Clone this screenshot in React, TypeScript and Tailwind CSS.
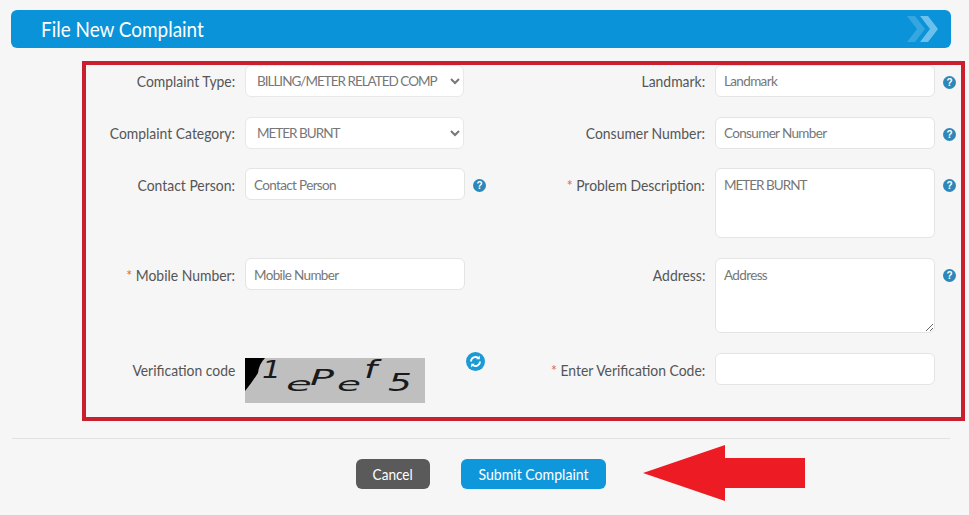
import React from "react";

function Help() {
  return (
    <svg width="13" height="13" viewBox="0 0 13 13" className="shrink-0">
      <circle cx="6.5" cy="6.5" r="6.5" fill="#2d88b8" />
      <text x="6.5" y="10" textAnchor="middle" fontSize="10" fontWeight="700" fill="#fff" fontFamily="Liberation Sans, sans-serif">?</text>
    </svg>
  );
}

function Label({ text, req, tight }: { text: string; req?: boolean; tight?: boolean }) {
  return (
    <div className={`flex w-[149px] shrink-0 justify-end text-right text-[16px] text-[#555] whitespace-nowrap ${tight ? "leading-[32px]" : "leading-[33px]"}`}>
      <span className="inline-block origin-right scale-x-[0.87]">
        {req && <span className="text-[#e4663a]">* </span>}
        {text}
      </span>
    </div>
  );
}

const ctl = "w-[220px] shrink-0 rounded-[6px] border border-[#e4e4e4] bg-white text-[13.5px] tracking-[-0.65px] text-[#777] outline-none placeholder:text-[#777]";

function Field({ label, req, placeholder, value, h = "h-[32px]", multi, resize, help = true, tight }: { label: string; req?: boolean; placeholder?: string; value?: string; h?: string; multi?: boolean; resize?: boolean; help?: boolean; tight?: boolean }) {
  return (
    <div className="flex items-start">
      <Label text={label} req={req} tight={tight} />
      {multi ? (
        <textarea readOnly defaultValue={value} placeholder={placeholder} className={`${ctl} ${h} ml-[10px] px-[8px] py-[7px] leading-[18px] ${resize ? "resize" : "resize-none"} ${value ? "tracking-[-1px]" : ""}`} />
      ) : (
        <input readOnly placeholder={placeholder} className={`${ctl} ${h} ml-[10px] px-[8px] ${tight ? "" : "pt-[1px]"}`} />
      )}
      {help && <div className="ml-[8px] mt-[11px]"><Help /></div>}
    </div>
  );
}

function Select({ label, value }: { label: string; value: string }) {
  return (
    <div className="flex items-start">
      <Label text={label} tight />
      <select defaultValue={value} className="ml-[10px] h-[32px] w-[219px] rounded-[6px] border border-[#e8e8e8] bg-white pl-[7px] text-[13.5px] tracking-[-1px] text-[#777] outline-none">
        <option>{value}</option>
      </select>
    </div>
  );
}

export default function App() {
  return (
    <div className="h-[515px] w-[969px] overflow-hidden bg-[#f6f6f6] pt-[10px] [font-family:Lato,'Liberation_Sans',sans-serif]">
      <div className="ml-[11px] flex h-[38px] w-[940px] items-center justify-between rounded-[6px] bg-[#0a93d8] pb-[2px] pl-[30px] pr-[12px]">
        <span className="inline-block origin-left scale-x-[0.86] text-[22px] text-white">File New Complaint</span>
        <svg width="32" height="26" viewBox="0 0 32 26" className="mt-[2px]">
          <path d="M0 0h8l10 13L8 26H0l10-13z" fill="#36a6e0" />
          <path d="M13 0h8l10 13-10 13h-8l10-13z" fill="#6cc0ec" />
        </svg>
      </div>

      <div className="ml-[82px] mt-[13px] grid h-[360px] w-[883px] grid-cols-[470px_1fr] grid-rows-[52px_51px_90px_95px_1fr] border-4 border-[#c8202f]">
        <Select label="Complaint Type:" value="BILLING/METER RELATED COMP" />
        <Field label="Landmark:" placeholder="Landmark" tight />
        <Select label="Complaint Category:" value="METER BURNT" />
        <Field label="Consumer Number:" placeholder="Consumer Number" tight />
        <Field label="Contact Person:" placeholder="Contact Person" />
        <Field label="Problem Description:" req multi h="h-[70px]" value="METER BURNT" />
        <Field label="Mobile Number:" req placeholder="Mobile Number" help={false} />
        <Field label="Address:" multi resize h="h-[75px]" placeholder="Address" />
        <div className="flex items-start">
          <Label text="Verification code" />
          <svg width="180" height="45" viewBox="0 0 180 45" className="ml-[10px] mt-[5px] shrink-0">
            <rect width="180" height="45" fill="#bfbfbf" />
            <path d="M0 0h20Q14 6 13 15Q6 26 0 33z" fill="#000" />
            <g fontFamily="DejaVu Sans, sans-serif" fontStyle="italic" fill="#1a1a1a">
              <text x="17" y="20" fontSize="24" textLength="19" lengthAdjust="spacingAndGlyphs">1</text>
              <text x="41" y="33" fontSize="20" textLength="26" lengthAdjust="spacingAndGlyphs">e</text>
              <text x="65" y="27" fontSize="21" textLength="24" lengthAdjust="spacingAndGlyphs">P</text>
              <text x="92" y="33" fontSize="20" textLength="24" lengthAdjust="spacingAndGlyphs">e</text>
              <text x="119" y="20" fontSize="24" textLength="13" lengthAdjust="spacingAndGlyphs">f</text>
              <text x="143" y="33" fontSize="24" textLength="24" lengthAdjust="spacingAndGlyphs">5</text>
            </g>
          </svg>
          <svg width="19" height="19" viewBox="0 0 19 19" className="ml-[41px] -mt-[1px] shrink-0">
            <circle cx="9.5" cy="9.5" r="9.5" fill="#1b9ad6" />
            <path d="M5 9.5a4.5 4.5 0 0 1 7.5-3.3M14 9.5a4.5 4.5 0 0 1-7.5 3.3" fill="none" stroke="#fff" strokeWidth="1.8" />
            <path d="M13.8 3.6v3.6h-3.6zM5.2 15.4v-3.6h3.6z" fill="#fff" />
          </svg>
        </div>
        <Field label="Enter Verification Code:" req help={false} />
      </div>

      <div className="ml-[12px] mt-[17px] h-px w-[938px] bg-[#e2e2e2]" />

      <div className="ml-[356px] mt-[6px] flex items-center">
        <button className="mt-[1px] h-[30px] w-[74px] rounded-[6px] bg-[#5a5a5a] pt-[1px] text-[16px] text-white"><span className="inline-block scale-x-[0.85]">Cancel</span></button>
        <button className="ml-[31px] mt-[1px] h-[30px] w-[145px] rounded-[6px] bg-[#0f97dc] pt-[1px] text-[16px] text-white"><span className="inline-block scale-x-[0.88]">Submit Complaint</span></button>
        <svg width="163" height="56" viewBox="0 0 163 56" className="ml-[37px] shrink-0">
          <path d="M0 28L82 0v13h80v30H82v13z" fill="#ed1c24" />
        </svg>
      </div>
    </div>
  );
}
